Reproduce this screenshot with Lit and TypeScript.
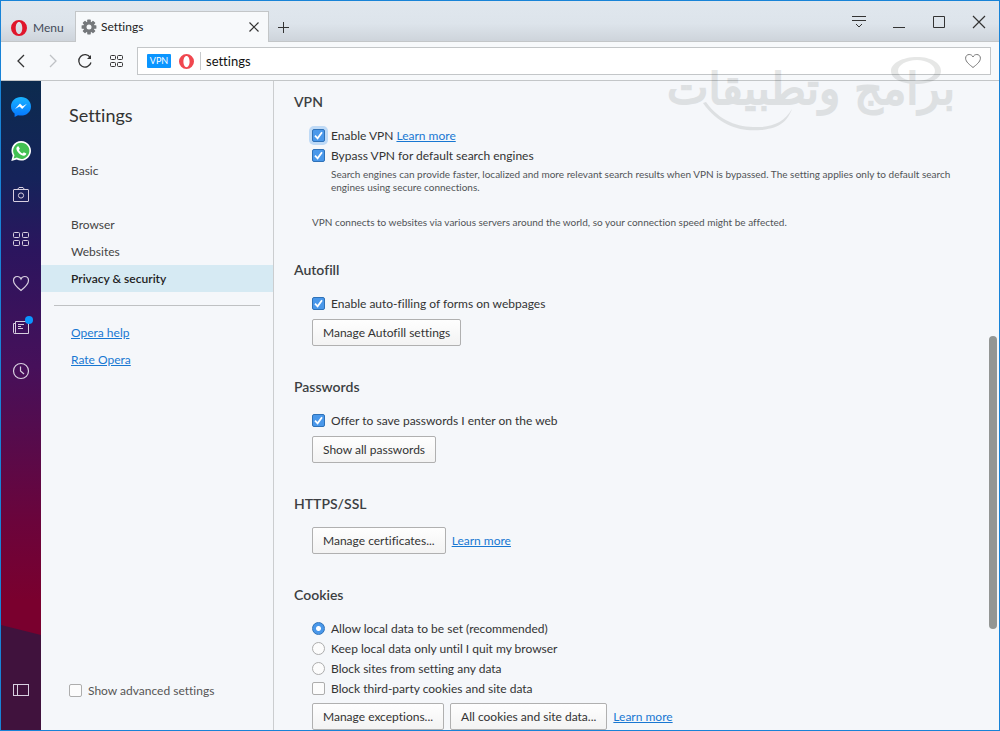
import { LitElement, html, css, svg, nothing } from "lit";
import { customElement, property } from "lit/decorators.js";

const FONT = css`Lato, "Open Sans", sans-serif`;

const operaMark = (fill: string, size: number) => html`
  <svg width=${size} height=${size} viewBox="0 0 16 16" aria-hidden="true">
    <path fill=${fill} fill-rule="evenodd" d="M8 0a8 8 0 1 0 0 16A8 8 0 1 0 8 0zM8 2c1.900 0 3.300 2.600 3.300 6S9.900 14 8 14 4.700 11.400 4.700 8 6.100 2 8 2z"/>
  </svg>`;

@customElement("tab-strip")
export class TabStrip extends LitElement {
  static styles = css`
    :host {
      display: flex;
      flex: none;
      height: 41px;
      box-sizing: border-box;
      font: 12px/16px ${FONT};
      font-variant-ligatures: none;
      color: #222;
      background: linear-gradient(#e0e7ee 0, #dde4eb 55%, #cdd3da 100%);
      box-shadow: inset 0 -1px #c3c6c8;
    }
    button {
      appearance: none;
      border: 0;
      padding: 0;
      background: none;
      font: inherit;
      color: inherit;
      display: flex;
      align-items: center;
      justify-content: center;
    }
    .menu { gap: 6px; padding: 12px 0 0 10px; width: 74px; box-sizing: border-box; justify-content: flex-start; color: #444b5a; }
    .tab {
      display: flex;
      align-items: center;
      gap: 4px;
      width: 194px;
      box-sizing: border-box;
      margin-top: 10px;
      padding: 0 8px 0 5px;
      background: #f7f9fb;
      border: 1px solid #c3c6c8;
      border-bottom: 0;
    }
    .name { flex: 1; }
    .add { width: 28px; padding-top: 10px; }
    .system { margin-left: auto; display: flex; }
    .system button { width: 40px; }
  `;
  render() {
    return html`
      <button class="menu">${operaMark("#e0162b", 16)}<span>Menu</span></button>
      <div class="tab">
        <svg width="16" height="16" viewBox="0 0 16 16" aria-hidden="true">
          <g fill="#75787b">
            ${[0, 45, 90, 135].map((a) => svg`<rect x="6.200" y="0.600" width="3.600" height="14.800" rx=".6" transform="rotate(${a} 8 8)"/>`)}
            <circle cx="8" cy="8" r="5.600"/>
          </g>
          <circle cx="8" cy="8" r="2.500" fill="#f7f9fb"/>
        </svg>
        <span class="name">Settings</span>
        <button aria-label="Close tab">
          <svg width="12" height="12" viewBox="0 0 12 12"><path d="M1.500 1.500l9 9m0-9l-9 9" stroke="#333" stroke-width="1.200"/></svg>
        </button>
      </div>
      <button class="add" aria-label="New tab">
        <svg width="12" height="12" viewBox="0 0 12 12"><path d="M6.500 1v11M1 6.500h11" stroke="#333"/></svg>
      </button>
      <div class="system">
        <button aria-label="Tab menu">
          <svg width="16" height="14" viewBox="0 0 16 14" fill="none" stroke="#333"><path d="M1 1.500h14M1 5.500h14M5 9l3 3 3-3"/></svg>
        </button>
        <button aria-label="Minimize">
          <svg width="14" height="14" viewBox="0 0 14 14"><path d="M1 12.500h12" stroke="#333"/></svg>
        </button>
        <button aria-label="Maximize">
          <svg width="14" height="14" viewBox="0 0 14 14"><path d="M1.500 1.500h11v11h-11z" fill="none" stroke="#333"/></svg>
        </button>
        <button aria-label="Close">
          <svg width="14" height="14" viewBox="0 0 14 14"><path d="M1 1l12 12M13 1L1 13" stroke="#333" stroke-width="1.200"/></svg>
        </button>
      </div>`;
  }
}

@customElement("address-bar")
export class AddressBar extends LitElement {
  static styles = css`
    :host {
      display: flex;
      flex: none;
      align-items: center;
      height: 39px;
      box-sizing: border-box;
      padding: 0 8px 0 4px;
      background: #f7f9fb;
      border-bottom: 1px solid #c3c6c8;
      font: 13px/18px ${FONT};
      font-variant-ligatures: none;
    }
    button { appearance: none; border: 0; padding: 0; background: none; display: flex; justify-content: center; width: 32px; }
    .field {
      flex: 1;
      display: flex;
      align-items: center;
      height: 28px;
      box-sizing: border-box;
      margin-left: 4px;
      padding: 0 1px 0 9px;
      background: #fff;
      border: 1px solid #c3c6c8;
    }
    .badge { flex: none; width: 24px; height: 14px; border-radius: 1px; background: #0a95ff; color: #fff; font: 9px/14px ${FONT}; text-align: center; margin-right: 8px; }
    .divider { width: 1px; height: 18px; background: #c8cacc; margin: 0 5px 0 6px; }
    input { flex: 1; min-width: 0; border: 0; padding: 0; outline: 0; font: inherit; color: #111; background: none; }
  `;
  render() {
    return html`
      <button aria-label="Back"><svg width="16" height="16" viewBox="0 0 16 16" fill="none" stroke="#333" stroke-width="1.300"><path d="M11 2L5 8l6 6"/></svg></button>
      <button aria-label="Forward"><svg width="16" height="16" viewBox="0 0 16 16" fill="none" stroke="#bfc2c5" stroke-width="1.300"><path d="M5 2l6 6-6 6"/></svg></button>
      <button aria-label="Reload">
        <svg width="16" height="16" viewBox="0 0 16 16" fill="none" stroke="#333" stroke-width="1.300"><path d="M14 9.500A6.200 6.200 0 1 1 13.300 4.600"/><path d="M14 2v4h-4z" fill="#333" stroke="none"/></svg>
      </button>
      <button aria-label="Speed Dial">
        <svg width="16" height="16" viewBox="0 0 16 16" fill="none" stroke="#333"><rect x="1.500" y="2.500" width="5" height="4" rx="1"/><rect x="8.500" y="2.500" width="5" height="4" rx="1"/><rect x="1.500" y="9.500" width="5" height="4" rx="1"/><rect x="8.500" y="9.500" width="5" height="4" rx="1"/></svg>
      </button>
      <div class="field">
        <span class="badge">VPN</span>
        ${operaMark("#f0474f", 15)}
        <span class="divider"></span>
        <input type="text" aria-label="Address" value="settings" />
        <button aria-label="Bookmark">
          <svg width="16" height="16" viewBox="0 0 16 16" fill="none" stroke="#777"><path d="M8 14.500C5 12 .6 9 .6 5.200.6 3 2.200 1.500 4.200 1.500 6 1.500 7.400 2.500 8 4c.6-1.500 2-2.500 3.800-2.500 2 0 3.600 1.500 3.600 3.700C15.400 9 11 12 8 14.500z"/></svg>
        </button>
      </div>`;
  }
}

@customElement("side-rail")
export class SideRail extends LitElement {
  static styles = css`
    :host {
      position: relative;
      flex: none;
      display: flex;
      flex-direction: column;
      width: 40px;
      box-sizing: border-box;
      padding: 4px 0 18px;
      background: linear-gradient(#0c2b4e 0, #15235a 15%, #2b155e 26%, #46105a 44%, #560b4c 55%, #6b043b 68%, #7a002e 80%);
    }
    .floor {
      position: absolute;
      left: 0;
      right: 0;
      bottom: 0;
      height: 105px;
      background: #40123d;
      clip-path: polygon(0 0, 100% 10px, 100% 100%, 0 100%);
    }
    button { position: relative; appearance: none; border: 0; padding: 0; background: none; height: 44px; display: flex; align-items: center; justify-content: center; }
    svg { overflow: visible; }
    .spacer { flex: 1; }
  `;
  private line(label: string, body: unknown) {
    return html`<button aria-label=${label}>
      <svg width="18" height="18" viewBox="0 0 18 18" fill="none" stroke="#d8cfe0" stroke-width="1">${body}</svg>
    </button>`;
  }
  render() {
    return html`
      <div class="floor"></div>
      <button aria-label="Messenger">
        <svg width="20" height="20" viewBox="0 0 20 20">
          <defs><linearGradient id="m" x2="0" y2="1"><stop stop-color="#19b4ff"/><stop offset="1" stop-color="#0475ff"/></linearGradient></defs>
          <path fill="url(#m)" d="M10 0C4.400 0 0 4.100 0 9.400c0 3 1.400 5.400 3.600 7.100V20l3.400-1.800c1 .3 2 .4 3 .4 5.600 0 10-4 10-9.200S15.600 0 10 0z"/>
          <path fill="#fff" d="M4 12l5-5.400 2.700 2.600L16 6.800 11.200 12 8.500 9.500z"/>
        </svg>
      </button>
      <button aria-label="WhatsApp">
        <svg width="20" height="20" viewBox="0 0 20 20">
          <path fill="#fff" d="M10.200 0A9.800 9.800 0 0 0 1.700 14.600L.3 20l5.400-1.500A9.800 9.800 0 1 0 10.200 0z"/>
          <path fill="#43c152" d="M10.200 1.700a8.100 8.100 0 0 0-6.700 12.600l-.9 3.200 3.300-.9a8.100 8.100 0 1 0 4.300-14.900z"/>
          <path fill="#fff" d="M7.400 5.200c-.8-.2-2 1-2 2.300 0 3 4.200 7.200 7.400 7.200 1.300 0 2.600-1 2.500-2.100l-2.500-1.300-1.200 1.300c-1.600-.6-3-2-3.700-3.500l1-1.300z"/>
        </svg>
      </button>
      ${this.line("Snapshot", svg`<rect x="1.500" y="3.500" width="15" height="12" rx=".5"/><path d="M5.500 3.500l1.500-2h4l1.500 2"/><circle cx="9" cy="9.500" r="2.600"/>`)}
      ${this.line("Speed Dial", svg`<rect x="1.500" y="2.500" width="6" height="5" rx="1"/><rect x="10.500" y="2.500" width="6" height="5" rx="1"/><rect x="1.500" y="10.500" width="6" height="5" rx="1"/><rect x="10.500" y="10.500" width="6" height="5" rx="1"/>`)}
      ${this.line("Bookmarks", svg`<path stroke-width="1.200" d="M9 16.500C6 14 1.500 10.500 1.500 6.500c0-2.400 1.600-4 3.800-4C7 2.500 8.400 3.500 9 5c.6-1.500 2-2.500 3.700-2.500 2.200 0 3.800 1.600 3.800 4 0 4-4.500 7.500-7.500 10z"/>`)}
      ${this.line("Personal news", svg`<path d="M2.500 15.500h14v-12h-13v11c0 1.300-2 1.300-2 0v-9h2M6 6.500h6M6 8.500h3M6 10.500h5"/><circle cx="17" cy="2" r="4" fill="#0a95ff" stroke="none"/>`)}
      ${this.line("History", svg`<circle cx="9" cy="9" r="7.500" stroke-width="1.200"/><path stroke-width="1.200" d="M8.500 4.500V9l3.500 3"/>`)}
      <span class="spacer"></span>
      ${this.line("Sidebar setup", svg`<rect x="1.500" y="3.500" width="15" height="11"/><path d="M5.500 3.500v11"/>`)}`;
  }
}

@customElement("settings-nav")
export class SettingsNav extends LitElement {
  @property() current = "Privacy & security";
  static styles = css`
    :host {
      flex: none;
      display: flex;
      flex-direction: column;
      width: 233px;
      box-sizing: border-box;
      border-right: 1px solid #cbcdcf;
      font: 12px/27px ${FONT};
      font-variant-ligatures: none;
      color: #444;
    }
    h1 { margin: 20px 0 28px 28px; font-size: 18px; line-height: 28px; font-weight: 400; color: #333; }
    nav { display: flex; flex-direction: column; }
    a { color: inherit; text-decoration: none; padding-left: 30px; }
    .first { margin-bottom: 27px; }
    .current { background: #d6eaf3; color: #222; font-weight: 600; }
    hr { margin: 13px; border: 0; height: 1px; background: #bfc1c3; }
    .links { display: flex; flex-direction: column; align-items: flex-start; padding-left: 30px; }
    .links a { padding: 0; color: #1877d2; text-decoration: underline; }
    .advanced { display: flex; align-items: center; gap: 6px; margin: auto 0 26px 28px; color: #555; }
    input { appearance: none; margin: 0; width: 13px; height: 13px; box-sizing: border-box; border: 1px solid #adadad; border-radius: 2px; background: #fcfcfc; }
  `;
  render() {
    return html`
      <h1>Settings</h1>
      <nav>
        ${["Basic", "Browser", "Websites", "Privacy & security"].map(
          (t, i) => html`<a href="#" class=${t === this.current ? "current" : i === 0 ? "first" : nothing}>${t}</a>`
        )}
      </nav>
      <hr />
      <div class="links"><a href="#">Opera help</a><a href="#">Rate Opera</a></div>
      <label class="advanced"><input type="checkbox" />Show advanced settings</label>`;
  }
}

@customElement("settings-page")
export class SettingsPage extends LitElement {
  static styles = css`
    :host {
      flex: 1;
      min-width: 0;
      display: flex;
      overflow: hidden;
      font: 12px/20px ${FONT};
      font-variant-ligatures: none;
      color: #333;
    }
    main { flex: 1; min-width: 0; display: flex; flex-direction: column; gap: 31px; padding: 11px 28px 0 20px; }
    section { padding-left: 18px; }
    h2 { margin: 0 0 13px -18px; font-size: 14px; line-height: 20px; font-weight: 600; color: #3c3f42; }
    a { color: #1877d2; }
    .checks { margin-top: 14px; }
    .option { display: flex; align-items: center; gap: 6px; height: 20px; }
    .option a { margin-left: -3px; }
    .help, .note { margin: 0; font-size: 10px; line-height: 13px; color: #505356; }
    .help { padding: 2px 0 0 19px; }
    .note { padding-top: 22px; }
    .actions { display: flex; align-items: center; gap: 6px; }
    .below { margin-top: 5px; }
    .choices + .below { margin-top: 4px; }
    button {
      appearance: none;
      height: 27px;
      padding: 0 10px;
      border: 1px solid #b0b0b0;
      border-radius: 2px;
      background: linear-gradient(#fefefe, #f3f3f3);
      font: inherit;
      font-variant-ligatures: none;
      color: #333;
      white-space: nowrap;
    }
    input { appearance: none; flex: none; margin: 0 0 1px; width: 13px; height: 13px; box-sizing: border-box; border: 1px solid #adadad; border-radius: 2px; background: #fcfcfc; }
    input[type="checkbox"]:checked {
      border-color: #2f72b8;
      background: #4a98ea url("data:image/svg+xml,%3Csvg xmlns='http://www.w3.org/2000/svg' viewBox='0 0 11 11'%3E%3Cpath d='M2 5.700l2.600 2.600L9 2.300' fill='none' stroke='white' stroke-width='1.800'/%3E%3C/svg%3E");
    }
    input[type="radio"] { border-radius: 50%; }
    input[type="radio"]:checked { border-color: #2f72b8; background: radial-gradient(circle, #fff 0, #fff 2px, #4a98ea 3px); }
    .focused { box-shadow: 0 0 0 3px #bfdaf6; }
    .track { flex: none; width: 10px; display: grid; grid-template-rows: 255fr 293fr 101fr; }
    .thumb { grid-row: 2; width: 8px; border-radius: 4px; background: #939694; }
  `;
  render() {
    return html`
      <main>
        <section>
          <h2>VPN</h2>
          <div class="checks">
            <div class="option"><input id="vpn" class="focused" type="checkbox" checked /><label for="vpn">Enable VPN</label><a href="#">Learn more</a></div>
            <label class="option"><input type="checkbox" checked />Bypass VPN for default search engines</label>
          </div>
          <p class="help">Search engines can provide faster, localized and more relevant search results when VPN is bypassed. The setting applies only to default search engines using secure connections.</p>
          <p class="note">VPN connects to websites via various servers around the world, so your connection speed might be affected.</p>
        </section>
        <section>
          <h2>Autofill</h2>
          <div class="checks"><label class="option"><input type="checkbox" checked />Enable auto-filling of forms on webpages</label></div>
          <div class="actions below"><button>Manage Autofill settings</button></div>
        </section>
        <section>
          <h2>Passwords</h2>
          <div class="checks"><label class="option"><input type="checkbox" checked />Offer to save passwords I enter on the web</label></div>
          <div class="actions below"><button>Show all passwords</button></div>
        </section>
        <section>
          <h2>HTTPS/SSL</h2>
          <div class="actions"><button>Manage certificates...</button><a href="#">Learn more</a></div>
        </section>
        <section>
          <h2>Cookies</h2>
          <div class="checks choices">
            ${["Allow local data to be set (recommended)", "Keep local data only until I quit my browser", "Block sites from setting any data"].map(
              (t, i) => html`<label class="option"><input type="radio" name="cookies" ?checked=${i === 0} />${t}</label>`
            )}
            <label class="option"><input type="checkbox" />Block third-party cookies and site data</label>
          </div>
          <div class="actions below"><button>Manage exceptions...</button><button>All cookies and site data...</button><a href="#">Learn more</a></div>
        </section>
      </main>
      <div class="track"><div class="thumb"></div></div>`;
  }
}

@customElement("app-root")
export class AppRoot extends LitElement {
  static styles = css`
    :host {
      position: relative;
      display: flex;
      flex-direction: column;
      height: 100vh;
      box-sizing: border-box;
      overflow: hidden;
      border: 1px solid #1883d7;
      background: #f5f7fa;
    }
    .body { flex: 1; min-height: 0; display: flex; }
    .watermark { position: absolute; top: 46px; right: 38px; width: 296px; height: 92px; opacity: 0.12; pointer-events: none; }
    .watermark text { font: 44px "DejaVu Sans", sans-serif; stroke: #3a3f3c; stroke-width: 2px; }
  `;
  render() {
    return html`
      <tab-strip></tab-strip>
      <address-bar></address-bar>
      <div class="body">
        <side-rail></side-rail>
        <settings-nav></settings-nav>
        <settings-page></settings-page>
      </div>
      <svg class="watermark" viewBox="0 0 296 92" fill="#3a3f3c">
        <text x="146" y="57" text-anchor="middle" direction="rtl">برامج وتطبيقات</text>
        <g>
          <path d="M38 56C54 79 76 85 96 83s26-9 31-21C120 74 110 79 96 80 76 81 56 76 41 55z"/>
          <path fill-rule="evenodd" d="M252 10c14 0 24 6 24 14s-11 13-25 13-25-5-25-13 12-14 26-14zm0 3c-11 0-19 5-19 11s8 10 18 10 19-4 19-10-8-11-18-11z"/>
        </g>
      </svg>`;
  }
}
